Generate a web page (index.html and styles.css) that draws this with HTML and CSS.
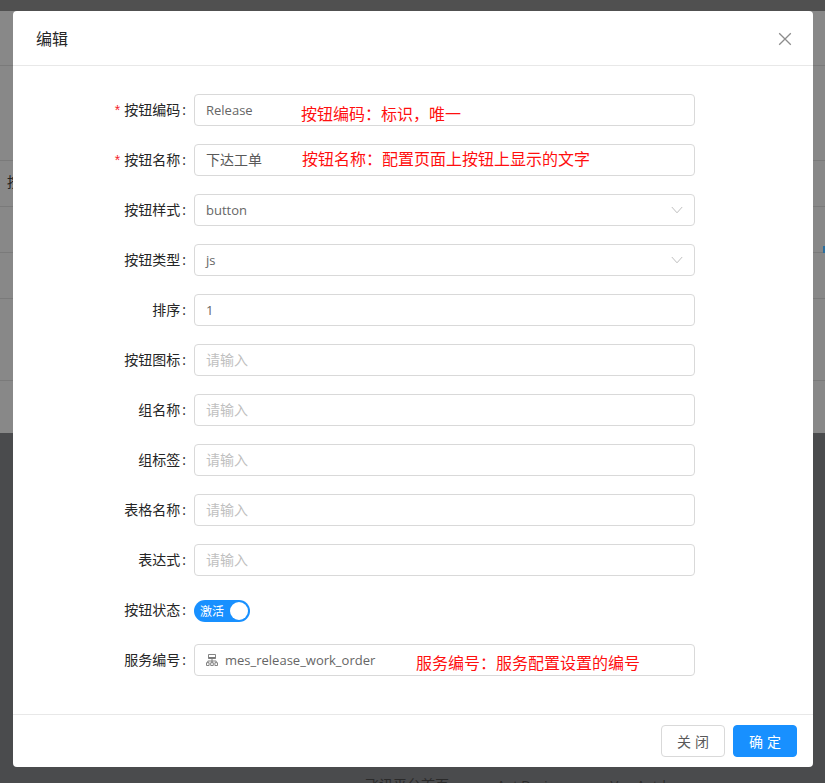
FILE: index.html
```html
<!DOCTYPE html>
<html lang="zh-CN">
<head>
<meta charset="utf-8">
<title>编辑</title>
<link rel="stylesheet" href="styles.css">
</head>
<body>
<div class="page">
  <div class="top-strip"></div>
  <div class="backdrop-panel">
    <div class="bg-row bg-row-a"></div>
    <div class="bg-row bg-row-b"><span class="bg-label">按钮</span></div>
    <div class="bg-row bg-row-c"></div>
    <div class="bg-row bg-row-c"><span class="bg-mark"></span></div>
    <div class="bg-row bg-row-d"></div>
    <div class="bg-row bg-row-e"></div>
    <div class="bg-row bg-row-f"></div>
  </div>
  <div class="bg-footer">
    <span>飞讯平台首页</span><span class="bg-link">Ant Design</span><span class="bg-link">Vue Antd</span>
  </div>
</div>

<div class="modal">
  <header class="modal-header">
    <h2 class="modal-title">编辑</h2>
    <svg class="close-icon" viewBox="0 0 14 14" width="14" height="14"><path d="M1.2 1.2 12.8 12.8M12.8 1.2 1.2 12.8"/></svg>
  </header>

  <form class="modal-body">
    <div class="form-row">
      <label class="form-label"><span class="req">*</span>按钮编码</label>
      <div class="field"><span class="value">Release</span><span class="note note-code">按钮编码：标识，唯一</span></div>
    </div>
    <div class="form-row">
      <label class="form-label"><span class="req">*</span>按钮名称</label>
      <div class="field"><span class="value-cjk">下达工单</span><span class="note note-name">按钮名称：配置页面上按钮上显示的文字</span></div>
    </div>
    <div class="form-row">
      <label class="form-label">按钮样式</label>
      <div class="field field-select"><span class="value">button</span>
        <svg class="chevron" viewBox="0 0 12 8" width="12" height="8"><path d="M.8 1 6 6.8 11.2 1"/></svg>
      </div>
    </div>
    <div class="form-row">
      <label class="form-label">按钮类型</label>
      <div class="field field-select"><span class="value">js</span>
        <svg class="chevron" viewBox="0 0 12 8" width="12" height="8"><path d="M.8 1 6 6.8 11.2 1"/></svg>
      </div>
    </div>
    <div class="form-row">
      <label class="form-label">排序</label>
      <div class="field"><span class="value">1</span></div>
    </div>
    <div class="form-row">
      <label class="form-label">按钮图标</label>
      <div class="field"><span class="placeholder">请输入</span></div>
    </div>
    <div class="form-row">
      <label class="form-label">组名称</label>
      <div class="field"><span class="placeholder">请输入</span></div>
    </div>
    <div class="form-row">
      <label class="form-label">组标签</label>
      <div class="field"><span class="placeholder">请输入</span></div>
    </div>
    <div class="form-row">
      <label class="form-label">表格名称</label>
      <div class="field"><span class="placeholder">请输入</span></div>
    </div>
    <div class="form-row">
      <label class="form-label">表达式</label>
      <div class="field"><span class="placeholder">请输入</span></div>
    </div>
    <div class="form-row">
      <label class="form-label">按钮状态</label>
      <div class="switch"><span class="switch-text">激活</span><span class="switch-knob"></span></div>
    </div>
    <div class="form-row">
      <label class="form-label">服务编号</label>
      <div class="field">
        <svg class="tree-icon" viewBox="0 0 12 12" width="12" height="12">
          <path class="tree-line" d="M2.5.5h7v4h-7zM6 4.5v3M1.8 8.5V7h8.4v1.5M6 7v1.5M.5 8.7h2.6v2.8H.5zM4.7 8.7h2.6v2.8H4.7zM8.9 8.7h2.6v2.8H8.9z"/>
          <path class="tree-fill" d="M2.5 3h7v1.6h-7z"/>
        </svg>
        <span class="value value-service">mes_release_work_order</span>
        <span class="note note-service">服务编号：服务配置设置的编号</span>
      </div>
    </div>
  </form>

  <footer class="modal-footer">
    <button type="button" class="btn">关 闭</button>
    <button type="button" class="btn btn-primary">确 定</button>
  </footer>
</div>
</body>
</html>
```

FILE: styles.css
```css
* { box-sizing: border-box; }
html, body { margin: 0; padding: 0; height: 100%; overflow: hidden; }
body {
  font-family: "Open Sans", "Noto Sans CJK SC", sans-serif;
  font-size: 13px;
  color: #595959;
  background: #4a4b4d;
}
.page { height: 783px; display: flex; flex-direction: column; overflow: hidden; }
.top-strip { height: 11px; background: #505050; flex: none; }
.backdrop-panel { height: 422px; flex: none; background: #888; display: flex; flex-direction: column; }
.bg-row { border-bottom: 1px solid #7a7a7a; flex: none; position: relative; }
.bg-row-a { height: 55px; }
.bg-row-b { height: 95px; }
.bg-row-c { height: 46px; }
.bg-row-d { height: 46px; }
.bg-row-e { height: 82px; }
.bg-row-f { height: 52px; border-bottom: 0; }
.bg-label { position: absolute; left: 7px; bottom: -30px; color: #222; font-size: 14px; line-height: 18px; font-family: "Noto Sans CJK SC", sans-serif; }
.bg-mark { position: absolute; right: 0; bottom: -1px; width: 2px; height: 7px; background: #2b6f9e; }
.bg-footer { flex: none; height: 350px; display: flex; align-items: flex-start; padding: 342px 0 0 365px; gap: 48px; font-size: 14px; line-height: 20px; color: #2a2a2a; overflow: hidden; }
.bg-link { font-size: 13px; }

.modal {
  position: absolute;
  left: 13px;
  top: 11px;
  width: 800px;
  height: 756px;
  background: #fff;
  border-radius: 4px;
  display: flex;
  flex-direction: column;
}
.modal-header {
  height: 55px;
  flex: none;
  padding: 0 24px;
  border-bottom: 1px solid #e8e8e8;
  display: flex;
  align-items: center;
  justify-content: space-between;
}
.modal-title { margin: 0 0 0 -1px; font-size: 16px; font-weight: 400; line-height: 54px; color: #262626; font-family: "Noto Sans CJK SC", sans-serif; }
.close-icon { fill: none; stroke: #8c8c8c; stroke-width: 1.3; margin-right: -3px; margin-top: 1px; }

.modal-body { flex: 1; padding-top: 28px; display: flex; flex-direction: column; gap: 18px; }
.form-row { display: flex; align-items: center; height: 32px; }
.form-label {
  width: 173px;
  margin-right: 8px;
  padding-bottom: 2px;
  text-align: right;
  color: #262626;
  white-space: nowrap;
  font-size: 14px;
  line-height: 20px;
  font-family: "Noto Sans CJK SC", sans-serif;
}
.form-label::after { content: ":"; margin-left: 2px; font-family: "Open Sans", sans-serif; }
.req { color: #f5222d; margin-right: 4px; font-family: "Liberation Sans", sans-serif; }
.field {
  position: relative;
  width: 501px;
  height: 32px;
  padding: 0 11px;
  border: 1px solid #d9d9d9;
  border-radius: 4px;
  display: flex;
  align-items: center;
  background: #fff;
}
.field-select { justify-content: space-between; }
.value { color: #666; white-space: nowrap; }
.value-cjk, .placeholder { padding-bottom: 2px; font-size: 14px; line-height: 20px; font-family: "Noto Sans CJK SC", sans-serif; }
.value-cjk { color: #595959; }
.placeholder { color: #bfbfbf; }
.value-service { margin-left: 7px; }
.chevron { fill: none; stroke: #bfbfbf; stroke-width: 1; }
.tree-icon { flex: none; }
.tree-fill { fill: #777; }
.tree-line { fill: none; stroke: #777; stroke-width: .9; }

.note { position: absolute; color: #ff0f0f; font-size: 16px; line-height: 20px; white-space: nowrap; font-family: "Noto Sans CJK SC", sans-serif; }
.note-code { left: 106px; top: 8px; }
.note-name { left: 107px; top: 3px; }
.note-service { left: 221px; top: 7px; }

.switch {
  position: relative;
  width: 56px;
  height: 22px;
  margin-top: 2px;
  border-radius: 11px;
  background: #1890ff;
  display: flex;
  align-items: center;
  padding-left: 6px;
}
.switch-text { color: #fff; font-size: 12px; line-height: 20px; font-family: "Noto Sans CJK SC", sans-serif; }
.switch-knob { position: absolute; right: 2px; top: 2px; width: 18px; height: 18px; border-radius: 50%; background: #fff; }

.modal-footer {
  height: 53px;
  flex: none;
  padding: 10px 16px;
  border-top: 1px solid #e8e8e8;
  display: flex;
  justify-content: flex-end;
  gap: 8px;
}
.btn {
  width: 64px;
  height: 32px;
  padding: 0;
  border: 1px solid #d9d9d9;
  border-radius: 4px;
  background: #fff;
  color: #595959;
  font-family: "Noto Sans CJK SC", sans-serif;
  font-size: 14px;
  word-spacing: 1px;
}
.btn-primary { background: #1890ff; border-color: #1890ff; color: #fff; }
```
